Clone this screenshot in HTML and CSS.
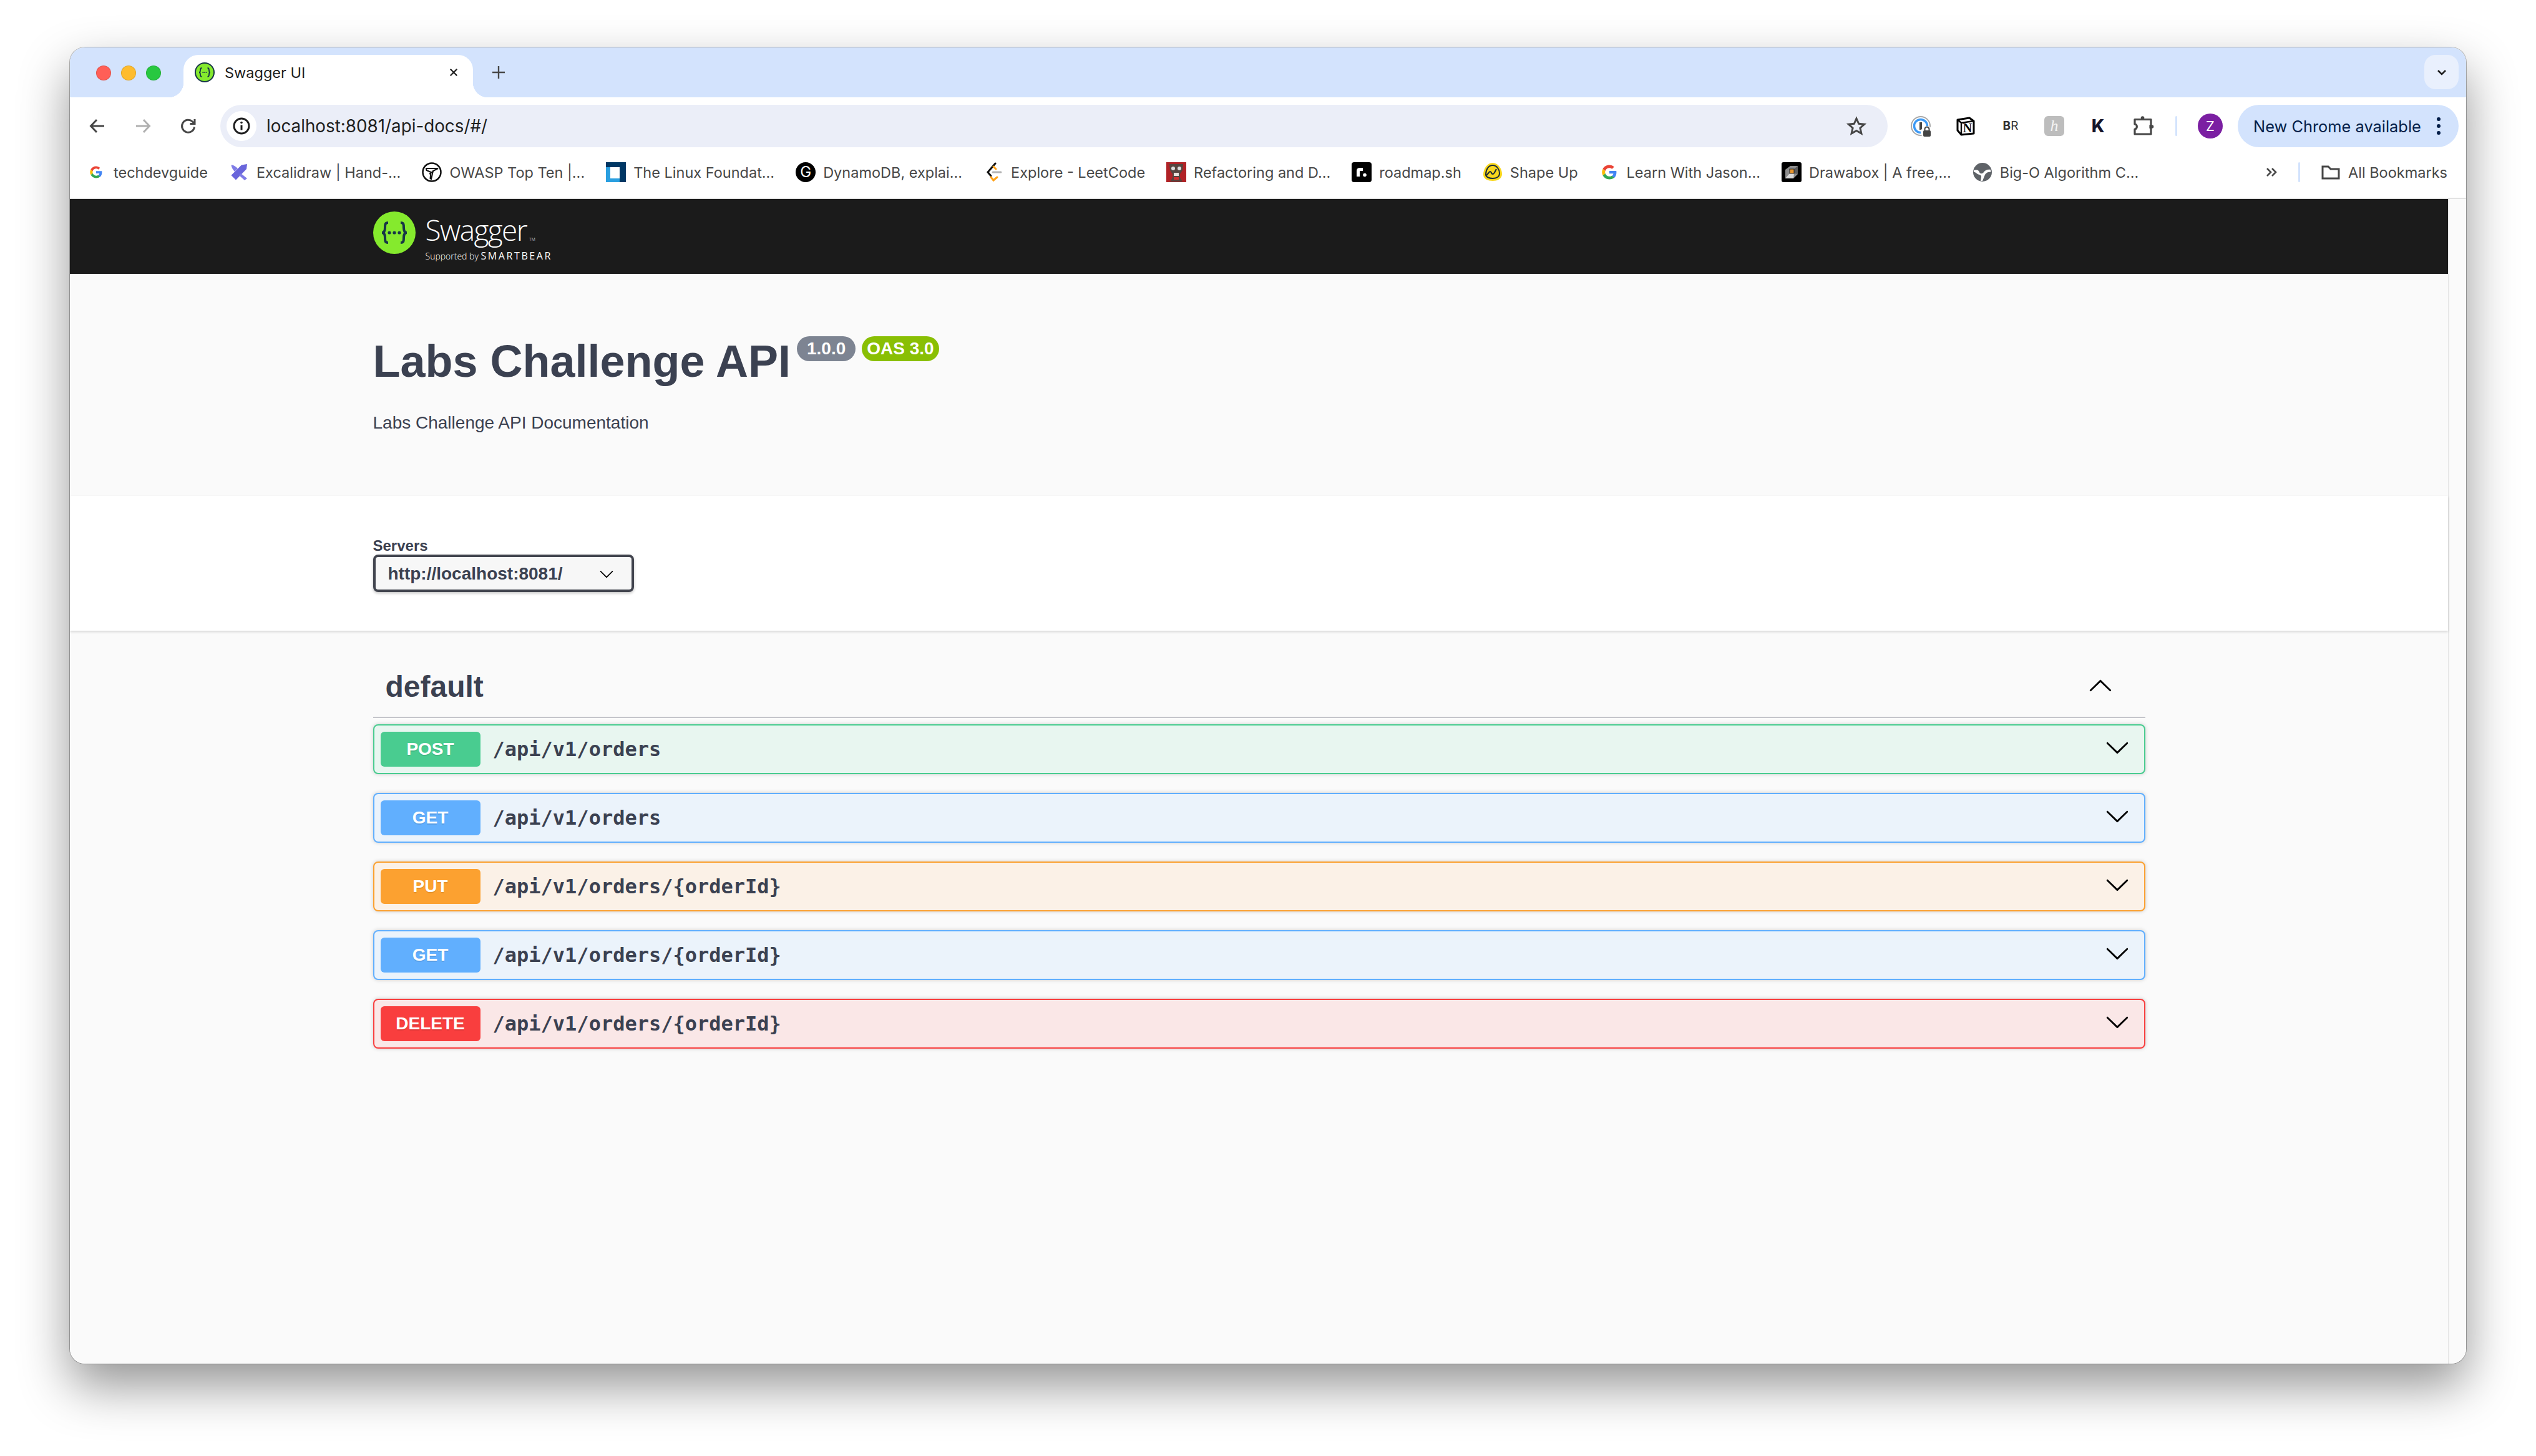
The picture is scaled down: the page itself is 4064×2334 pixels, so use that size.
FILE: index.html
```html
<!DOCTYPE html>
<html lang="en">
  <head>
    <meta charset="UTF-8" />
    <title>Swagger UI</title>
    <link rel="stylesheet" href="styles.css">
  </head>
  <body>
    <svg class="sprites" aria-hidden="true">
      <symbol id="arrow" viewBox="0 0 20 20">
        <path d="M17.418 6.109c.272-.268.709-.268.979 0s.271.701 0 .969l-7.908 7.83c-.27.268-.707.268-.979 0l-7.908-7.83c-.27-.268-.27-.701 0-.969.271-.268.709-.268.979 0L10 13.25l7.418-7.141z" />
      </symbol>
      <g id="google">
        <path fill="#4285f4" d="M44 24.5c0-1.6-.1-2.8-.4-4.1H24v7.7h11.3c-.5 2.8-2 5.2-4.5 6.800l6.900 5.300C41.800 36.500 44 31 44 24.500z" />
        <path fill="#34a853" d="M24 44c5.400 0 10-1.800 13.700-4.800l-6.900-5.300c-1.800 1.300-4.200 2.100-6.800 2.100-5.200 0-9.700-3.500-11.300-8.300l-7.100 5.500C9.100 39.700 16 44 24 44z" />
        <path fill="#fbbc05" d="M12.700 27.700c-.9-2.500-.9-5 0-7.400l-7.100-5.500c-3 6-3 12.400 0 18.400z" />
        <path fill="#ea4335" d="M24 12c3 0 5.600 1 7.700 3l5.800-5.800C33.900 5.900 29.400 4 24 4 16 4 9.100 8.300 5.600 14.800l7.100 5.500C14.300 15.500 18.800 12 24 12z" />
      </g>
    </svg>

    <div class="window">
      <div class="tabstrip">
        <div class="lights">
          <span class="light red"></span>
          <span class="light yellow"></span>
          <span class="light green"></span>
        </div>
        <div class="tab">
          <svg class="tab-favicon" viewBox="0 0 32 32">
            <circle cx="16" cy="16" r="15" fill="#85ea2d" stroke="#173647" stroke-width="2" />
            <path d="M11.5 9C9 9 9 10.500 9 12.500S8.500 16 7 16c1.500 0 2 1.500 2 3.500S9 23 11.500 23M20.500 9c2.500 0 2.500 1.500 2.500 3.500s.5 3.500 2 3.500c-1.500 0-2 1.500-2 3.500s0 3.500-2.500 3.500" fill="none" stroke="#173647" stroke-width="1.8" />
            <path d="M12.5 16h7" stroke="#173647" stroke-width="1.8" stroke-dasharray="1.8 1.1" />
          </svg>
          <span class="tab-title">Swagger UI</span>
          <svg class="tab-close" viewBox="0 0 16 16"><path d="M2 2l12 12M14 2L2 14" /></svg>
        </div>
        <svg class="tab-new" viewBox="0 0 20 20"><path d="M10 0v20M0 10h20" /></svg>
        <div class="tab-list">
          <svg viewBox="0 0 16 10"><path d="M2 2l6 6 6-6" /></svg>
        </div>
      </div>

      <div class="toolbar">
        <svg class="nav-icon" viewBox="0 0 28 28"><path d="M25 14H4M13 4L3.500 14 13 24" /></svg>
        <svg class="nav-icon off" viewBox="0 0 28 28"><path d="M3 14h21M15 4l9.500 10L15 24" /></svg>
        <svg class="nav-icon" viewBox="0 0 28 28"><path d="M23.500 15.500a10 10 0 1 1-3-8.500L24 10.500M24 3v7.500h-7.500" /></svg>
        <div class="omnibox">
          <span class="site-info">
            <svg viewBox="0 0 28 28">
              <circle cx="14" cy="14" r="12" fill="none" stroke="#1f1f1f" stroke-width="3" />
              <path d="M14 12.500v8" stroke="#1f1f1f" stroke-width="3" />
              <circle cx="14" cy="8.500" r="1.800" fill="#1f1f1f" />
            </svg>
          </span>
          <span class="url">localhost:8081/api-docs/#/</span>
          <svg class="star" viewBox="0 0 32 32"><path d="M16 4l3.700 8.300 9 .9-6.800 6 2 8.800-7.900-4.600L8.100 28l2-8.800-6.800-6 9-.9z" /></svg>
        </div>
        <div class="extensions">
          <svg class="ext" viewBox="0 0 36 36">
            <circle cx="18" cy="18" r="15" fill="none" stroke="#a8a8a8" stroke-width="2" />
            <circle cx="18" cy="18" r="10.500" fill="none" stroke="#3d9af5" stroke-width="3.500" />
            <rect x="16" y="12" width="4" height="12" fill="#444" />
            <circle cx="28" cy="28" r="10" fill="#fff" />
            <rect x="22" y="25" width="12" height="10" rx="2" fill="#444" />
            <path d="M24.500 25v-2a3.500 3.500 0 0 1 7 0v2" fill="none" stroke="#444" stroke-width="2" />
          </svg>
          <svg class="ext" viewBox="0 0 36 36">
            <path d="M5 8l19-3 7 5v20l-20 2-6-7z" fill="#fff" stroke="#000" stroke-width="3" stroke-linejoin="round" />
            <path d="M5 8l6 5 20-3M11 13v19" fill="none" stroke="#000" stroke-width="2.400" />
            <text x="21" y="28" class="ext-notion">N</text>
          </svg>
          <span class="ext ext-br"><b>B</b>R</span>
          <span class="ext ext-h">h</span>
          <span class="ext ext-k">K</span>
          <svg class="ext" viewBox="0 0 36 36">
            <path class="puzzle" d="M5 7.500h26V17h-1v4h1v10H5v-8c4.500 0 4.500-8 0-8z" />
            <circle cx="17.500" cy="5" r="2.800" fill="#474747" />
            <circle cx="32.500" cy="19" r="2.800" fill="#474747" />
          </svg>
        </div>
        <span class="toolbar-sep"></span>
        <span class="avatar">Z</span>
        <div class="update-pill">
          <span>New Chrome available</span>
          <span class="update-dots"><i></i><i></i><i></i></span>
        </div>
      </div>

      <div class="bookmarks">
        <div class="bm-list">
          <a class="bm">
            <svg class="bm-icon" viewBox="-10 -10 68 68"><use href="#google" /></svg>
            <span>techdevguide</span>
          </a>
          <a class="bm">
            <svg class="bm-icon" viewBox="0 0 32 32">
              <path d="M29 3l-1 8-17 17.500L3.500 21 20 4.500z" fill="#6965db" />
              <path d="M3.500 4.500C6 4 10 6 14 10l-5 5C6 12 4 8 3.500 4.500zM19 18l10 8-4 3-9-8z" fill="#7f7ce6" />
            </svg>
            <span>Excalidraw | Hand-...</span>
          </a>
          <a class="bm">
            <svg class="bm-icon" viewBox="0 0 32 32">
              <circle cx="16" cy="16" r="14.500" fill="#fff" stroke="#111" stroke-width="2.500" />
              <path d="M7 10h19l-8 4-3 13-1.500-1 1-10-7-3zM12 19l7-5" fill="none" stroke="#111" stroke-width="2" />
            </svg>
            <span>OWASP Top Ten |...</span>
          </a>
          <a class="bm">
            <svg class="bm-icon" viewBox="0 0 32 32">
              <rect width="32" height="32" fill="#003764" />
              <path d="M0 8h22v24H0z" fill="#2a9fe0" />
              <rect x="7" y="8" width="15" height="18" fill="#fff" />
            </svg>
            <span>The Linux Foundat...</span>
          </a>
          <a class="bm">
            <span class="bm-icon badge-g">G</span>
            <span>DynamoDB, explai...</span>
          </a>
          <a class="bm">
            <svg class="bm-icon" viewBox="0 0 32 32">
              <path d="M19 2L7 16l5 6" fill="none" stroke="#111" stroke-width="3" stroke-linecap="round" />
              <path d="M16 7l4 4M12 24l4 5 6-5" fill="none" stroke="#ffa116" stroke-width="3" stroke-linecap="round" />
              <path d="M15 16h13" stroke="#b3b3b3" stroke-width="3" stroke-linecap="round" />
            </svg>
            <span>Explore - LeetCode</span>
          </a>
          <a class="bm">
            <svg class="bm-icon" viewBox="0 0 32 32">
              <rect width="32" height="32" fill="#b02226" />
              <path d="M5 3h22l-1 10-4 6v6l4 6H6l4-6v-6L6 13z" fill="#55453f" />
              <circle cx="11" cy="10" r="3" fill="#ddd" />
              <circle cx="21" cy="10" r="3" fill="#ddd" />
              <path d="M12 17h8v5h-8z" fill="#e8e0da" />
              <path d="M12 24h8v4h-8z" fill="#d32f2f" />
            </svg>
            <span>Refactoring and D...</span>
          </a>
          <a class="bm">
            <svg class="bm-icon" viewBox="0 0 32 32">
              <rect width="32" height="32" rx="4" fill="#000" />
              <path d="M10.500 23v-9c0-2 1.500-2.500 3-2.500H18" fill="none" stroke="#fff" stroke-width="5" />
              <circle cx="21" cy="20.500" r="2.800" fill="#fff" />
            </svg>
            <span>roadmap.sh</span>
          </a>
          <a class="bm">
            <svg class="bm-icon" viewBox="0 0 32 32">
              <path d="M16 1c9 0 15 10 15 18 0 8-8 11-15 11S1 27 1 20C1 11 7 1 16 1z" fill="#f9d71c" />
              <path d="M16 5c7 0 11 7 11 13 0 6-6 8-11 8S5 24 5 20c0-8 4-15 11-15z" fill="none" stroke="#1d2d35" stroke-width="2" />
              <path d="M6 21c2-1 4-6 6-6s2 4 4 4c3 0 4-5 6-8" fill="none" stroke="#1d2d35" stroke-width="2.200" />
            </svg>
            <span>Shape Up</span>
          </a>
          <a class="bm">
            <svg class="bm-icon" viewBox="-4 -4 56 56"><use href="#google" /></svg>
            <span>Learn With Jason...</span>
          </a>
          <a class="bm">
            <svg class="bm-icon" viewBox="0 0 32 32">
              <rect width="32" height="32" rx="3" fill="#000" />
              <path d="M6 12l8-6h12v13l-7 7H6z" fill="#8d8d8d" />
              <path d="M6 26l7-8h7l-1 8z" fill="#d9d9d9" />
              <path d="M20 11l6-5v13l-6 -1z" fill="#5c5c5c" />
              <rect x="13" y="11" width="7" height="7" fill="#e8962e" stroke="#222" />
            </svg>
            <span>Drawabox | A free,...</span>
          </a>
          <a class="bm">
            <svg class="bm-icon" viewBox="0 0 32 32">
              <circle cx="16" cy="16" r="15" fill="#5f6368" />
              <path d="M2 13c5-2 8 0 9 3s5 3 7 0 6-5 11-4v4c-4-1-7 1-9 4l-4 10h-3l1-6c1-4-4-4-6-5s-4-4-6-3z" fill="#fff" />
            </svg>
            <span>Big-O Algorithm C...</span>
          </a>
        </div>
        <svg class="bm-more" viewBox="0 0 20 20"><path d="M3 4l6 6-6 6M11 4l6 6-6 6" /></svg>
        <span class="bm-sep"></span>
        <a class="bm">
          <svg class="bm-icon folder" viewBox="0 0 32 32"><path d="M3 26V7h9l4 4h13v15z" /></svg>
          <span>All Bookmarks</span>
        </a>
      </div>

      <div class="page">
        <div class="swagger">
          <div class="topbar">
            <div class="wrapper logo">
              <svg class="logo-mark" viewBox="0 0 68 68">
                <circle cx="34" cy="34" r="34" fill="#85ea2d" />
                <path d="M24 18c-5 0-5 3-5 8s-1 8-5 8c4 0 5 3 5 8s0 8 5 8M44 18c5 0 5 3 5 8s1 8 5 8c-4 0-5 3-5 8s0 8-5 8" fill="none" stroke="#173647" stroke-width="4" />
                <circle cx="26" cy="34" r="2.600" fill="#173647" />
                <circle cx="34" cy="34" r="2.600" fill="#173647" />
                <circle cx="42" cy="34" r="2.600" fill="#173647" />
              </svg>
              <div class="logo-text">
                <div class="logo-name">Swagger<small>TM</small></div>
                <div class="logo-by">Supported by <b>SMARTBEAR</b></div>
              </div>
            </div>
          </div>

          <div class="info-section">
            <div class="wrapper">
              <div class="title-row">
                <h1>Labs Challenge API</h1>
                <span class="version">1.0.0</span>
                <span class="version oas">OAS 3.0</span>
              </div>
              <p class="description">Labs Challenge API Documentation</p>
            </div>
          </div>

          <div class="scheme-wrap">
            <div class="wrapper">
              <div class="servers-label">Servers</div>
              <div class="server-select">
                <span>http://localhost:8081/</span>
                <svg viewBox="0 0 20 20"><use href="#arrow" /></svg>
              </div>
            </div>
          </div>

          <div class="wrapper operations">
            <div class="tag-head">
              <h3>default</h3>
              <svg class="tag-arrow" viewBox="0 0 20 20"><use href="#arrow" /></svg>
            </div>
            <div class="op post">
              <span class="method">POST</span>
              <span class="path">/api/v1/orders</span>
              <svg class="op-arrow" viewBox="0 0 20 20"><use href="#arrow" /></svg>
            </div>
            <div class="op get">
              <span class="method">GET</span>
              <span class="path">/api/v1/orders</span>
              <svg class="op-arrow" viewBox="0 0 20 20"><use href="#arrow" /></svg>
            </div>
            <div class="op put">
              <span class="method">PUT</span>
              <span class="path">/api/v1/orders/{orderId}</span>
              <svg class="op-arrow" viewBox="0 0 20 20"><use href="#arrow" /></svg>
            </div>
            <div class="op get">
              <span class="method">GET</span>
              <span class="path">/api/v1/orders/{orderId}</span>
              <svg class="op-arrow" viewBox="0 0 20 20"><use href="#arrow" /></svg>
            </div>
            <div class="op delete">
              <span class="method">DELETE</span>
              <span class="path">/api/v1/orders/{orderId}</span>
              <svg class="op-arrow" viewBox="0 0 20 20"><use href="#arrow" /></svg>
            </div>
          </div>
        </div>
        <div class="scroll-gutter"></div>
      </div>
    </div>
  </body>
</html>
```

FILE: styles.css
```css
* {
  box-sizing: border-box;
}
html,
body {
  margin: 0;
  height: 100%;
}
body {
  background: #fff;
  padding: 76px 112px 148px;
  font-family: "Liberation Sans", Arial, sans-serif;
  overflow: hidden;
}
.sprites {
  display: none;
}

/* browser window */
.window {
  display: flex;
  flex-direction: column;
  height: 2110px;
  border-radius: 24px;
  overflow: hidden;
  background: #fff;
  box-shadow: 0 0 0 1px rgba(0, 0, 0, 0.28), 0 36px 80px rgba(0, 0, 0, 0.42);
}
.tabstrip {
  display: flex;
  align-items: flex-end;
  height: 80px;
  background: #d3e3fd;
  position: relative;
}
.lights {
  display: flex;
  align-self: flex-start;
  gap: 16px;
  margin: 29px 38px 0 42px;
}
.light {
  width: 24px;
  height: 24px;
  border-radius: 50%;
  border: 1px solid rgba(0, 0, 0, 0.12);
}
.light.red {
  background: #ff5f57;
}
.light.yellow {
  background: #febc2e;
}
.light.green {
  background: #28c840;
}
.tab {
  display: flex;
  align-items: center;
  width: 464px;
  height: 68px;
  margin-left: -2px;
  padding: 0 24px 12px 18px;
  background: #fff;
  border-radius: 24px 24px 0 0;
  position: relative;
}
.tab::before,
.tab::after {
  content: "";
  position: absolute;
  bottom: 0;
  width: 24px;
  height: 24px;
}
.tab::before {
  left: -24px;
  background: radial-gradient(circle at 0 0, #d3e3fd 24px, #fff 24.5px);
}
.tab::after {
  right: -24px;
  background: radial-gradient(circle at 100% 0, #d3e3fd 24px, #fff 24.5px);
}
.tab-favicon {
  width: 32px;
  height: 32px;
  flex: none;
}
.tab-title {
  margin-left: 16px;
  flex: 1;
  font: 400 23.5px Inter, sans-serif;
  color: #1f1f1f;
}
.tab-close {
  width: 14px;
  height: 14px;
  fill: none;
  stroke: #1f1f1f;
  stroke-width: 2.6;
}
.tab-new {
  width: 20px;
  height: 20px;
  margin: 0 0 30px 31px;
  fill: none;
  stroke: #474747;
  stroke-width: 2.4;
}
.tab-list {
  display: flex;
  align-items: center;
  justify-content: center;
  align-self: flex-start;
  width: 55px;
  height: 55px;
  margin: 12px 12px 0 auto;
  background: #e9f0fd;
  border-radius: 18px;
}
.tab-list svg {
  width: 16px;
  height: 10px;
  fill: none;
  stroke: #1f1f1f;
  stroke-width: 2.6;
}

.toolbar {
  display: flex;
  align-items: center;
  height: 92px;
  padding: 0 12px 0 30px;
  border-radius: 24px 24px 0 0;
  background: #fff;
  position: relative;
  z-index: 1;
}
.nav-icon {
  width: 28px;
  height: 28px;
  margin-right: 45px;
  fill: none;
  stroke: #474747;
  stroke-width: 3;
}
.nav-icon.off {
  stroke: #b0b0b0;
}
.nav-icon:nth-of-type(3) {
  margin-right: 37px;
}
.omnibox {
  display: flex;
  align-items: center;
  flex: 1;
  height: 68px;
  padding: 0 34px 0 10px;
  border-radius: 34px;
  background: #ebeef8;
}
.site-info {
  display: flex;
  align-items: center;
  justify-content: center;
  width: 48px;
  height: 48px;
  border-radius: 50%;
  background: #fff;
}
.site-info svg {
  width: 28px;
  height: 28px;
}
.url {
  flex: 1;
  margin-left: 16px;
  font: 400 27.8px Inter, sans-serif;
  color: #1f1f1f;
}
.star {
  width: 32px;
  height: 32px;
  fill: none;
  stroke: #474747;
  stroke-width: 3;
}
.extensions {
  display: flex;
  align-items: center;
  gap: 36px;
  margin-left: 35px;
}
.ext {
  width: 36px;
  height: 36px;
  flex: none;
}
.ext-notion {
  font: 700 20px "Liberation Serif", serif;
  text-anchor: middle;
  fill: #000;
}
.ext-br {
  font: 400 19px/36px Inter, sans-serif;
  color: #333;
  text-align: center;
}
.ext-h {
  width: 32px;
  height: 32px;
  border-radius: 6px;
  background: #bdbdbd;
  color: #f4f4f4;
  font: italic 400 26px/32px "Liberation Serif", serif;
  text-align: center;
}
.ext-k {
  font: 800 28px/36px Inter, sans-serif;
  color: #15152b;
  text-align: center;
}
.puzzle {
  fill: none;
  stroke: #474747;
  stroke-width: 3.2;
  stroke-linejoin: round;
}
.toolbar-sep {
  width: 3px;
  height: 32px;
  margin-left: 34px;
  background: #d3e3fd;
  border-radius: 2px;
}
.avatar {
  width: 40px;
  height: 40px;
  margin: 0 24px 0 33px;
  border-radius: 50%;
  background: #7b1fa2;
  color: #fff;
  font: 400 22px/40px Inter, sans-serif;
  text-align: center;
}
.update-pill {
  display: flex;
  align-items: center;
  justify-content: space-between;
  width: 354px;
  height: 68px;
  padding: 0 29px 0 25px;
  border-radius: 34px;
  background: #d3e3fd;
  color: #041e49;
  font: 400 25.4px Inter, sans-serif;
}
.update-dots {
  display: flex;
  flex-direction: column;
  gap: 5px;
}
.update-dots i {
  width: 6px;
  height: 6px;
  border-radius: 50%;
  background: #041e49;
}

.bookmarks {
  display: flex;
  align-items: center;
  height: 69px;
  padding: 0 30px 13px 26px;
  background: #fff;
  font: 400 23.5px Inter, sans-serif;
  color: #474747;
}
.bm-list {
  display: flex;
  align-items: center;
  gap: 34px;
  flex: 1;
}
.bm {
  display: flex;
  align-items: center;
  gap: 12px;
  white-space: nowrap;
}
.bm-icon {
  width: 32px;
  height: 32px;
  flex: none;
}
.badge-g {
  border-radius: 50%;
  background: #000;
  color: #fff;
  font: 400 24px/32px Inter, sans-serif;
  text-align: center;
}
.bm-more {
  width: 20px;
  height: 20px;
  fill: none;
  stroke: #474747;
  stroke-width: 2.6;
}
.bm-sep {
  width: 3px;
  height: 32px;
  margin: 0 33px;
  background: #d3e3fd;
  border-radius: 2px;
}
.folder {
  fill: none;
  stroke: #474747;
  stroke-width: 3;
}

/* swagger ui */
.page {
  display: flex;
  flex: 1;
  border-top: 2px solid #e3e3e3;
  background: #fafafa;
  min-height: 0;
}
.swagger {
  flex: 1;
  min-width: 0;
}
.scroll-gutter {
  width: 29px;
  border-left: 2px solid #e8e8e8;
}
.wrapper {
  width: 2840px;
  margin: 0 auto;
}
.topbar {
  height: 120px;
  padding-top: 20px;
  background: #1b1b1b;
}
.logo {
  display: flex;
  color: #fff;
}
.logo-mark {
  width: 68px;
  height: 68px;
  flex: none;
}
.logo-text {
  margin-left: 16px;
}
.logo-name {
  margin-top: 4px;
  font: 300 46px/50px "Open Sans", sans-serif;
  letter-spacing: -1.6px;
}
.logo-name small {
  font-size: 7px;
  letter-spacing: 0;
  margin-left: 4px;
}
.logo-by {
  margin-top: -8px;
  font: 300 14px/18px "Open Sans", sans-serif;
}
.logo-by b {
  font-weight: 500;
  font-size: 16px;
  letter-spacing: 2.6px;
}
.info-section {
  height: 356px;
  padding-top: 97px;
}
.title-row {
  display: flex;
  align-items: flex-start;
}
h1 {
  margin: 0;
  font-size: 72px;
  line-height: 86px;
  font-weight: 700;
  color: #3b4151;
}
.version {
  height: 40px;
  margin: 3px 0 0 10px;
  padding: 0 16px;
  border-radius: 20px;
  background: #7d8492;
  color: #fff;
  font-size: 28px;
  line-height: 40px;
  font-weight: 700;
}
.version.oas {
  margin-left: 10px;
  padding: 0 8px;
  background: #89bf04;
}
.description {
  margin: 38px 0 0;
  font-size: 28px;
  line-height: 36px;
  color: #3b4151;
}
.scheme-wrap {
  height: 216px;
  padding-top: 66px;
  background: #fff;
  box-shadow: 0 2px 4px rgba(0, 0, 0, 0.15);
  position: relative;
}
.servers-label {
  font-size: 24px;
  line-height: 28px;
  font-weight: 700;
  color: #3b4151;
}
.server-select {
  display: flex;
  align-items: center;
  justify-content: space-between;
  width: 418px;
  height: 60px;
  padding: 2px 28px 0 20px;
  border: 4px solid #41444e;
  border-radius: 8px;
  background: #f7f7f7;
  box-shadow: 0 2px 4px rgba(0, 0, 0, 0.25);
  font-size: 28px;
  font-weight: 700;
  color: #3b4151;
}
.server-select svg {
  width: 24px;
  height: 24px;
  fill: #000;
}
.operations {
  padding-top: 34px;
}
.tag-head {
  display: flex;
  align-items: center;
  justify-content: space-between;
  height: 106px;
  padding: 6px 52px 0 20px;
  margin-bottom: 10px;
  border-bottom: 2px solid #c4c5ca;
}
h3 {
  margin: 0;
  font-size: 48px;
  font-weight: 700;
  color: #3b4151;
}
.tag-arrow {
  width: 40px;
  height: 40px;
  transform: rotate(180deg);
  fill: #000;
}
.op {
  display: flex;
  align-items: center;
  height: 80px;
  margin-bottom: 30px;
  padding: 0 23px 0 10px;
  border: 2px solid;
  border-radius: 8px;
  box-shadow: 0 0 6px rgba(0, 0, 0, 0.19);
}
.method {
  width: 160px;
  height: 56px;
  border-radius: 6px;
  color: #fff;
  font-size: 28px;
  font-weight: 700;
  line-height: 56px;
  text-align: center;
  text-shadow: 0 2px 0 rgba(0, 0, 0, 0.1);
}
.path {
  flex: 1;
  padding-left: 20px;
  font: 700 32px "DejaVu Sans Mono", monospace;
  color: #3b4151;
}
.op-arrow {
  width: 40px;
  height: 40px;
  margin-bottom: 6px;
  fill: #000;
}
.op.post {
  border-color: #49cc90;
  background: #e8f6f0;
}
.post .method {
  background: #49cc90;
}
.op.get {
  border-color: #61affe;
  background: #ebf3fb;
}
.get .method {
  background: #61affe;
}
.op.put {
  border-color: #fca130;
  background: #fbf1e7;
}
.put .method {
  background: #fca130;
}
.op.delete {
  border-color: #f93e3e;
  background: #fae7e7;
}
.delete .method {
  background: #f93e3e;
}
```
